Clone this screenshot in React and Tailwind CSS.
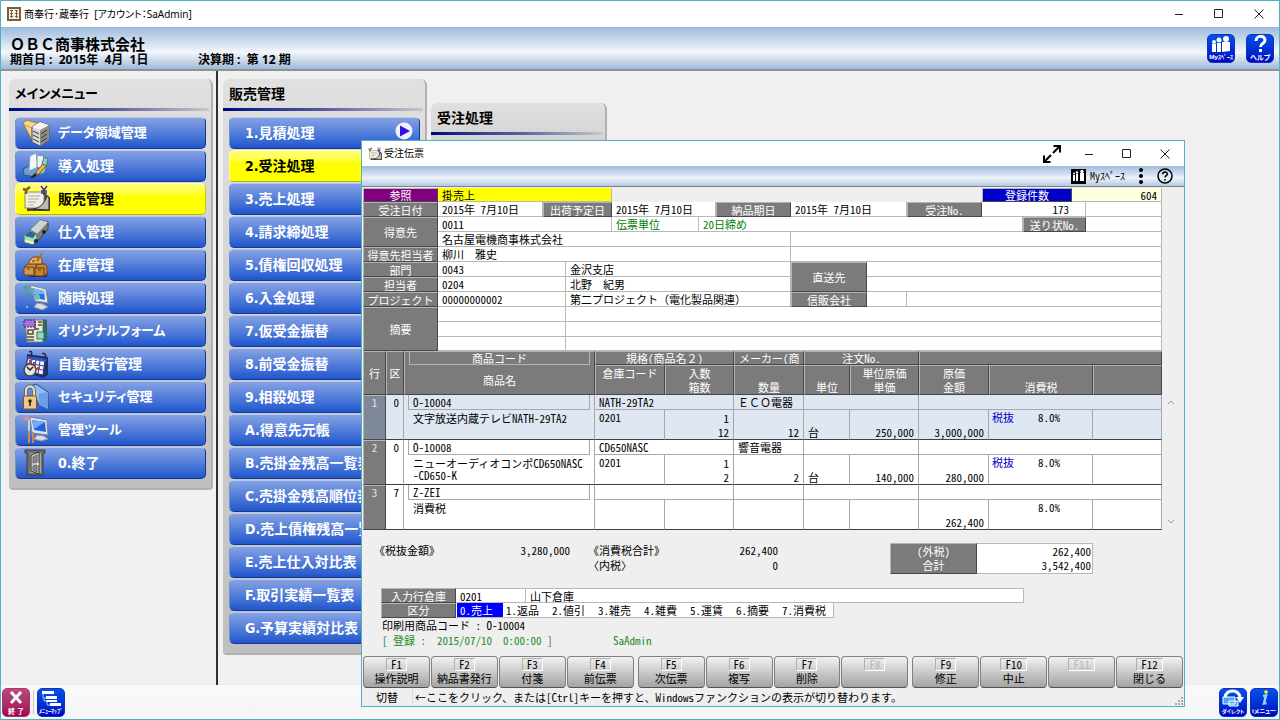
import { useState } from "react";

const mainMenu = [
  { label: "データ領域管理", icon: "data", kana: true },
  { label: "導入処理", icon: "intro" },
  { label: "販売管理", icon: "sales" },
  { label: "仕入管理", icon: "truck" },
  { label: "在庫管理", icon: "stock" },
  { label: "随時処理", icon: "monitor" },
  { label: "オリジナルフォーム", icon: "form", kana: true },
  { label: "自動実行管理", icon: "calendar" },
  { label: "セキュリティ管理", icon: "lock", kana: true },
  { label: "管理ツール", icon: "tools", kana: true },
  { label: "0.終了", icon: "door" },
];

const salesMenu = [
  "1.見積処理",
  "2.受注処理",
  "3.売上処理",
  "4.請求締処理",
  "5.債権回収処理",
  "6.入金処理",
  "7.仮受金振替",
  "8.前受金振替",
  "9.相殺処理",
  "A.得意先元帳",
  "B.売掛金残高一覧表",
  "C.売掛金残高順位表",
  "D.売上債権残高一覧表",
  "E.売上仕入対比表",
  "F.取引実績一覧表",
  "G.予算実績対比表",
];

const items = [
  { no: 1, kubun: "0", code: "O-10004", name: "文字放送内蔵テレビNATH-29TA2", spec: "NATH-29TA2", maker: "ＥＣＯ電器", wh: "0201", irisu: "1", hako: "12", qty: "12", unit: "台", price: "250,000", amount: "3,000,000", tax: "税抜", rate: "8.0%" },
  { no: 2, kubun: "0", code: "O-10008", name: "ニューオーディオコンポCD650NASC-CD650-K", spec: "CD650NASC", maker: "響音電器", wh: "0201", irisu: "1", hako: "2", qty: "2", unit: "台", price: "140,000", amount: "280,000", tax: "税抜", rate: "8.0%" },
  { no: 3, kubun: "7", code: "Z-ZEI", name: "消費税", amount: "262,400", rate: "8.0%" },
];

const kubunOptions = ["0.売上", "1.返品", "2.値引", "3.雑売", "4.雑費", "5.運賃", "6.摘要", "7.消費税"];

const fnGroups = [
  [["F1", "操作説明"], ["F2", "納品書発行"], ["F3", "付箋"], ["F4", "前伝票"]],
  [["F5", "次伝票"], ["F6", "複写"], ["F7", "削除"], ["F8", ""]],
  [["F9", "修正"], ["F10", "中止"], ["F11", ""], ["F12", "閉じる"]],
];

const icons = {
  data: (
    <>
      <path d="M1 4l4-3 3 1 8 2v15l-6 2z" fill="#f3d692" stroke="#a5772b" />
      <path d="M3 6l7 3v12" fill="none" stroke="#c89a48" />
      <path d="M10 8l8-5 9 3v15l-9 6-8-4z" fill="#d9d9d4" stroke="#555" />
      <path d="M18 11l9-5v15l-9 6z" fill="#8d8d88" />
      <path d="M10 8l8-5 9 3-9 5z" fill="#f5f5f0" />
      <path d="M11 12l6 3M11 16l6 3M11 20l6 3M19 15l6-4M19 19l6-4M19 23l6-4" stroke="#333" />
    </>
  ),
  intro: (
    <>
      <path d="M1 17l8-4 12 5-7 7-12-2z" fill="#6c9fca" stroke="#27557f" />
      <path d="M8 4l6-3 2 14-9 4z" fill="#f4f8fb" stroke="#8aa5bd" />
      <path d="M15 3l7 1-1 13-6-2z" fill="#e8f3f6" stroke="#6b98a5" />
      <path d="M22 5l4 2-3 13-5 3 1-7z" fill="#8fd0c3" stroke="#437d75" />
      <path d="M14 20l7-8 3 2-8 9z" fill="#eeb45a" stroke="#8a5a1d" />
      <path d="M8 26l5-5 2 2-4 3z" fill="#222" />
    </>
  ),
  sales: (
    <>
      <path d="M5 9h19l4 4v13H5z" fill="#494440" />
      <path d="M3 7h19v16H3z" fill="#f2efe2" stroke="#8d8878" />
      <path d="M6 11h12M6 14h11M6 17h8M7 20h5" stroke="#b2ab9b" />
      <path d="M11 24c7-1 11-5 14-13l2 1v13z" fill="#bdbab0" stroke="#292929" />
      <path d="M1 4l3 1 4-3M4 5v4" fill="none" stroke="#8b5a1f" strokeWidth="2.500" />
      <path d="M19 1l3 4 3-4M22 5v5M19 6h6M19 8h6" fill="none" stroke="#4826a0" strokeWidth="1.5" />
    </>
  ),
  truck: (
    <>
      <path d="M8 12L18 2l8 2v7L14 25l-5-9z" fill="#7c7f7e" stroke="#3f4342" />
      <path d="M8 12L18 2l8 2-11 12z" fill="#cfd2d1" />
      <path d="M2 17l6-5 7 4v6l-4 5-9-3z" fill="#a4deb4" stroke="#3b7c51" />
      <path d="M4 16l4-3 6 3-3 4-8-2z" fill="#335fa8" />
      <path d="M3 23l8 2" stroke="#f3f9c0" strokeWidth="2" />
      <circle cx="14" cy="23" r="2" fill="#1c2a20" />
      <circle cx="22" cy="14" r="2" fill="#222" />
    </>
  ),
  stock: (
    <>
      <path d="M5 26h19l2-4z" fill="#1c2547" />
      <path d="M2 16l4-3h8v10l-2 1H2z" fill="#d7984b" stroke="#744410" />
      <path d="M13 17l3-4h7l2 3v7l-3 2h-9z" fill="#c98533" stroke="#744410" />
      <path d="M7 10l4-4h7l2 2v5H7z" fill="#e2ab63" stroke="#744410" />
      <path d="M14 9l6-8 1 1-5 9z" fill="#b06f20" />
      <path d="M2 16h10v7M13 17h9v8M5 18h3M16 19h3M10 10h3" fill="none" stroke="#613608" />
    </>
  ),
  monitor: (
    <>
      <path d="M8 1l16 4 2 14-13-2z" fill="#e2e7f1" stroke="#79839b" />
      <path d="M10 4l12 3 1 9-10-2z" fill="#2b6ce0" />
      <path d="M10 4l12 3v3L12 10z" fill="#7fb0fa" />
      <path d="M15 19l6 1 5 3-6 3-8-3z" fill="#d9dce4" stroke="#8c93a7" />
      <circle cx="4" cy="4" r="2.5" fill="#4fa67c" />
      <circle cx="10" cy="6" r="2" fill="#57b395" />
      <circle cx="15" cy="13" r="3" fill="#69c7b0" />
      <circle cx="7" cy="11" r="2" fill="#49a07d" />
      <circle cx="5" cy="23" r="1" fill="#9fd6f0" />
    </>
  ),
  form: (
    <>
      <path d="M3 3h18v22H5z" fill="#eee9d6" stroke="#7c7868" />
      <path d="M21 2l4 1v20l-4 2z" fill="#2e6a59" />
      <path d="M6 13h5v4H6zM13 4v9M16 5h4M16 8h4M5 20h7M5 23h7M13 12h4" fill="none" stroke="#55503f" strokeWidth="1.5" />
      <rect x="2" y="3" width="11" height="7" fill="#a56fe0" stroke="#39206a" strokeDasharray="2 1" />
      <rect x="15" y="15" width="7" height="7" fill="#8fdcc0" stroke="#2b7b63" />
    </>
  ),
  calendar: (
    <>
      <path d="M5 4l21 3v18l-5 3L4 23z" fill="#1d2f6e" />
      <path d="M6 7l17 2-2 16L3 21z" fill="#f4f6fa" stroke="#24386f" />
      <path d="M6 6l18 3v3L5 9z" fill="#3158bd" />
      <path d="M5 13l17 3M4 17l17 3M10 9L8 22M14 10l-2 13M18 11l-2 13" stroke="#2648a8" />
      <path d="M7 10h3v3H7zM11 12h2v3h-2zM15 17h3v3h-3z" fill="#d93636" />
      <path d="M7 2c3-2 4 2 1 5M20 4c3-2 5 1 2 5" fill="none" stroke="#2b2b2b" strokeWidth="1.5" />
      <circle cx="8" cy="20" r="6" fill="#e3e3e3" stroke="#444" strokeWidth="1.5" />
      <path d="M5 17l3 3 3-3" fill="none" stroke="#222" strokeWidth="1.5" />
    </>
  ),
  lock: (
    <>
      <path d="M9 3l5-2 12 8v17l-9-4z" fill="#8fbdf2" stroke="#27488e" />
      <path d="M17 11l9-2v17l-9-4z" fill="#6ba0e8" />
      <path d="M4 13V8c0-6 8-6 8 0v5" fill="none" stroke="#5b4a26" strokeWidth="4" />
      <path d="M4 13V8c0-6 8-6 8 0v5" fill="none" stroke="#d6d9df" strokeWidth="2.500" />
      <rect x="1.500" y="13" width="13" height="13" rx="1" fill="#edc78a" stroke="#80561c" />
      <circle cx="8" cy="18" r="1.700" fill="#2b1c06" />
      <path d="M8 18v5" stroke="#2b1c06" strokeWidth="1.500" />
    </>
  ),
  tools: (
    <>
      <path d="M8 1l17 3 1 15-16-2z" fill="#dfe5ef" stroke="#74809a" />
      <path d="M10 4l13 2 1 10-12-2z" fill="#1f63e0" />
      <path d="M10 4l13 2-11 7z" fill="#71a9fb" />
      <path d="M15 19l7 1 4 3-7 2-7-2z" fill="#d8dbe4" stroke="#8c93a7" />
      <path d="M1 3h8" stroke="#cf9485" strokeWidth="3" />
      <path d="M7 4v11" stroke="#ccc" strokeWidth="2" />
      <path d="M7 15v12M11 16v11" stroke="#c98c3f" strokeWidth="2" />
    </>
  ),
  door: (
    <>
      <path d="M3 1h20v3h-2v22H5V4H3z" fill="#6f6f6f" stroke="#3c3c3c" />
      <path d="M8 4h11v20H8z" fill="#a8a8a8" />
      <path d="M9 6l8-3v22l-8-3z" fill="#c9c9c9" stroke="#333" />
      <path d="M11 8l4-2v7l-4 1zM11 17l4-1v7l-4-2z" fill="#8b8b8b" stroke="#555" strokeWidth=".7" />
      <circle cx="16" cy="15" r="1" fill="#f2f2f2" />
    </>
  ),
};

const GOTHIC = "font-['Noto_Sans_CJK_JP',sans-serif] text-[11px] leading-[14px] [font-feature-settings:'hwid']";
const WIDE = "[font-feature-settings:normal]";
const BEVEL = "border-t border-l border-b border-r border-t-[#b4b4b4] border-l-[#b4b4b4] border-b-[#484848] border-r-[#484848]";

function MenuPanel({ title, titleSize = "text-sm", className, children }) {
  return (
    <section className={`rounded-t-md rounded-b-sm border-r-2 border-b-2 border-[#b0b0b0] bg-linear-to-b from-[#e0e0e0] to-[#bfbfbf] ${className}`}>
      <h2 className={`h-[29px] pl-1.5 leading-[30px] font-bold text-black ${titleSize}`}>{title}</h2>
      <div className="mr-0.5 h-[3px] bg-linear-to-r from-[#000080] via-[#5a5a9c] to-[#c8c8c8]" />
      {children}
    </section>
  );
}

function MenuButton({ active, onClick, className, children }) {
  return (
    <button
      type="button"
      onClick={onClick}
      className={`flex h-8 w-full items-center rounded-[5px] border text-left font-bold whitespace-nowrap ${
        active
          ? "border-t-[#ffffb0] border-r-[#c8c800] border-b-[#b5b500] border-l-[#ffff90] bg-linear-to-b from-[#ffff78] to-[#ffff00] to-40% text-black"
          : "border-t-[#b4c8f0] border-r-[#16388c] border-b-[#16388c] border-l-[#7090d8] bg-linear-to-b from-[#86a2e4] to-[#1f55cc] text-white"
      } ${className}`}
    >
      {children}
    </button>
  );
}

function IconButton({ label, caption, color = "blue", size = "text-[7px]", children }) {
  return (
    <button
      type="button"
      aria-label={label}
      className={`flex h-[29px] w-7 shrink-0 flex-col items-center justify-between overflow-hidden rounded-[5px] border text-white ${
        color === "red" ? "border-[#b03070] bg-linear-to-b from-[#b84a7c] to-[#a00050]" : "border-[#1030c8] bg-linear-to-b from-[#0a50e8] to-[#0000c0]"
      }`}
    >
      <svg viewBox="0 0 24 18" className="h-[18px] w-6" fill="none">
        {children}
      </svg>
      <span className={`leading-[9px] font-bold whitespace-nowrap [font-feature-settings:'palt'] ${size}`}>{caption}</span>
    </button>
  );
}

function WindowButtons({ width = "w-10" }) {
  return (
    <div className="flex">
      <button type="button" aria-label="最小化" className={`flex items-center justify-center ${width}`}>
        <svg width="10" height="10" stroke="#222"><path d="M1 5.500h8" /></svg>
      </button>
      <button type="button" aria-label="最大化" className={`flex items-center justify-center ${width}`}>
        <svg width="10" height="10" fill="none" stroke="#222"><path d="M.5 .5h8v8h-8z" /></svg>
      </button>
      <button type="button" aria-label="閉じる" className={`flex items-center justify-center ${width}`}>
        <svg width="10" height="10" stroke="#222"><path d="M.5 .5l9 9M9.500 .5l-9 9" /></svg>
      </button>
    </div>
  );
}

function Tag({ htmlFor, bg = "bg-[#7b7b7b]", className, children }) {
  return (
    <label htmlFor={htmlFor} className={`flex items-center justify-center overflow-hidden whitespace-nowrap text-white ${BEVEL} ${bg} ${className}`}>
      {children}
    </label>
  );
}

function Field({ id, value = "", label, bg = "bg-white", className }) {
  return (
    <input
      id={id}
      aria-label={label}
      readOnly
      value={value}
      className={`block min-w-0 border-r border-b border-[#b8b8b8] px-1 outline-none ${bg} ${className}`}
    />
  );
}

function VoucherHead() {
  return (
    <div className="grid grid-cols-[75px_105px_23px_46px_87px_17px_75px_76px_40px_75px_41px_49px_14px_1fr] grid-rows-[14px_repeat(9,15px)_14px]">
      <Tag htmlFor="mode" bg="bg-[#800080]" className="col-start-1 row-start-1">参照</Tag>
      <Field id="mode" value="掛売上" bg="bg-[#ffff00]" className="col-start-2 col-end-5 row-start-1" />
      <Tag htmlFor="count" bg="bg-[#0000c8]" className="col-start-11 col-end-13 row-start-1">登録件数</Tag>
      <Field id="count" value="604" bg="bg-[#ffffe1]" className="col-start-13 col-end-15 row-start-1 text-right" />

      <Tag htmlFor="odate" className="col-start-1 row-start-2">受注日付</Tag>
      <Field id="odate" value="2015年 7月10日" className="col-start-2 row-start-2" />
      <Tag htmlFor="sdate" className="col-start-3 col-end-5 row-start-2">出荷予定日</Tag>
      <Field id="sdate" value="2015年 7月10日" className="col-start-5 col-end-7 row-start-2" />
      <Tag htmlFor="ddate" className="col-start-7 row-start-2">納品期日</Tag>
      <Field id="ddate" value="2015年 7月10日" className="col-start-8 col-end-10 row-start-2" />
      <Tag htmlFor="ono" className="col-start-10 row-start-2">受注No.</Tag>
      <Field id="ono" value="173" className="col-start-11 col-end-14 row-start-2 pr-4 text-right" />
      <div className="col-start-14 row-start-2 border-r border-b border-[#b8b8b8] bg-white" />

      <Tag htmlFor="cust" className="col-start-1 row-span-2 row-start-3">得意先</Tag>
      <Field id="cust" value="0011" className="col-start-2 col-end-5 row-start-3" />
      <Field label="伝票単位" value="伝票単位" className="col-start-5 row-start-3 text-[#008000]" />
      <Field label="締め日" value="20日締め" className="col-start-6 col-end-12 row-start-3 text-[#008000]" />
      <Tag htmlFor="slip" className="col-start-12 col-end-14 row-start-3">送り状No.</Tag>
      <Field id="slip" className="col-start-14 row-start-3" />
      <Field label="得意先名" value="名古屋電機商事株式会社" className="col-start-2 col-end-8 row-start-4" />
      <Field label="得意先名2" className="col-start-8 col-end-15 row-start-4" />

      <Tag htmlFor="person" className="col-start-1 row-start-5">得意先担当者</Tag>
      <Field id="person" value="柳川　雅史" className={`col-start-2 col-end-8 row-start-5 ${WIDE}`} />
      <Field label="得意先担当者2" className="col-start-8 col-end-15 row-start-5" />

      <Tag htmlFor="dept" className="col-start-1 row-start-6">部門</Tag>
      <Field id="dept" value="0043" className="col-start-2 col-end-4 row-start-6" />
      <Field label="部門名" value="金沢支店" className="col-start-4 col-end-8 row-start-6" />
      <Tag htmlFor="direct" className="col-start-8 row-span-2 row-start-6">直送先</Tag>
      <Field id="direct" className="col-start-9 col-end-15 row-start-6" />

      <Tag htmlFor="staff" className="col-start-1 row-start-7">担当者</Tag>
      <Field id="staff" value="0204" className="col-start-2 col-end-4 row-start-7" />
      <Field label="担当者名" value="北野　紀男" className={`col-start-4 col-end-8 row-start-7 ${WIDE}`} />
      <Field label="直送先名" className="col-start-9 col-end-15 row-start-7" />

      <Tag htmlFor="project" className="col-start-1 row-start-8">プロジェクト</Tag>
      <Field id="project" value="00000000002" className="col-start-2 col-end-4 row-start-8" />
      <Field label="プロジェクト名" value="第二プロジェクト（電化製品関連）" className={`col-start-4 col-end-8 row-start-8 ${WIDE}`} />
      <Tag htmlFor="credit" className="col-start-8 row-start-8">信販会社</Tag>
      <Field id="credit" className="col-start-9 row-start-8" />
      <Field label="信販会社名" className="col-start-10 col-end-15 row-start-8" />

      <Tag htmlFor="memo" className="col-start-1 row-span-3 row-start-9">摘要</Tag>
      <Field id="memo" className="col-start-2 col-end-4 row-start-9" />
      <Field label="摘要名" className="col-start-4 col-end-15 row-start-9" />
      <Field label="摘要2" className="col-start-2 col-end-4 row-start-10" />
      <Field label="摘要名2" className="col-start-4 col-end-15 row-start-10" />
      <Field label="摘要3" className="col-start-2 col-end-4 row-start-11" />
      <Field label="摘要名3" className="col-start-4 col-end-15 row-start-11" />
    </div>
  );
}

function Th({ className = "", children, ...rest }) {
  return (
    <th className={`overflow-hidden bg-[#7b7b7b] p-0 text-center font-normal whitespace-nowrap text-white ${BEVEL} ${className}`} {...rest}>
      {children}
    </th>
  );
}

function ItemTable() {
  const [selected, setSelected] = useState(1);
  const line = "border-r border-b border-[#a8a8a8]";
  const last = "border-r border-b border-r-[#a8a8a8] border-b-[#404040]";
  return (
    <table className="w-full table-fixed border-separate border-spacing-0">
      <colgroup>
        <col className="w-[23px]" />
        <col className="w-[18px]" />
        <col className="w-[191px]" />
        <col className="w-[70px]" />
        <col className="w-[69px]" />
        <col className="w-[70px]" />
        <col className="w-[46px]" />
        <col className="w-[69px]" />
        <col className="w-[70px]" />
        <col className="w-[104px]" />
        <col />
      </colgroup>
      <thead>
        <tr className="h-[14px]">
          <Th rowSpan={2}>行</Th>
          <Th rowSpan={2}>区</Th>
          <Th rowSpan={2} className="align-top">
            <div className="mx-1 h-[13px] border-x border-b border-[#b4b4b4] leading-[12px]">商品コード</div>
            <div className="pt-2">商品名</div>
          </Th>
          <Th colSpan={2} className="leading-[12px]">規格(商品名<span className={WIDE}>２</span>)</Th>
          <Th className="pl-1 text-left leading-[12px]">メーカー(商</Th>
          <Th colSpan={2} className="leading-[12px]">注文No.</Th>
          <Th colSpan={3} />
        </tr>
        <tr className="h-[30px]">
          <Th className="align-top">倉庫コード</Th>
          <Th><span className="block">入数</span><span className="block">箱数</span></Th>
          <Th className="align-bottom">数量</Th>
          <Th className="align-bottom">単位</Th>
          <Th><span className="block">単位原価</span><span className="block">単価</span></Th>
          <Th><span className="block">原価</span><span className="block">金額</span></Th>
          <Th className="align-bottom">消費税</Th>
          <Th />
        </tr>
      </thead>
      {items.map((it) => (
        <tbody key={it.no} onClick={() => setSelected(it.no)} className={selected === it.no ? "bg-[#dfe7f2]" : "bg-white"}>
          <tr className="h-[15px]">
            <td rowSpan={2} className={`p-0 text-center align-top leading-[13px] text-[#e4e4e4] ${BEVEL} ${selected === it.no ? "bg-[#7e8896]" : "bg-[#7b7b7b]"}`}>{it.no}</td>
            <td rowSpan={2} className={`p-0 pr-1 text-right align-top ${last}`}>{it.kubun}</td>
            <td rowSpan={2} className={`p-0 align-top ${last}`}>
              <div className="mx-1 h-[15px] border-x border-b border-[#a8a8a8] pl-1">{it.code}</div>
              <div className="pt-0.5 pr-2 pl-[9px] leading-[12px] break-all">{it.name}</div>
            </td>
            <td colSpan={2} className={`p-0 pl-1 ${line}`}>{it.spec}</td>
            <td className={`p-0 pl-1 whitespace-nowrap ${line} ${WIDE}`}>{it.maker}</td>
            <td colSpan={2} className={`p-0 ${line}`} />
            <td colSpan={3} className={`p-0 ${line}`} />
          </tr>
          <tr className="h-[30px]">
            <td className={`p-0 pl-1 align-top ${last}`}>{it.wh}</td>
            <td className={`p-0 pr-1 text-right ${last}`}>{it.irisu}<br />{it.hako}</td>
            <td className={`p-0 pr-1 text-right align-bottom ${last}`}>{it.qty}</td>
            <td className={`p-0 pl-1 align-bottom ${last}`}>{it.unit}</td>
            <td className={`p-0 pr-1 text-right align-bottom ${last}`}>{it.price}</td>
            <td className={`p-0 pr-1 text-right align-bottom ${last}`}>{it.amount}</td>
            <td className={`p-0 pr-8 pl-[3px] align-top ${last}`}>
              <div className="flex justify-between">
                <span className="text-[#0000c8]">{it.tax}</span>
                <span>{it.rate}</span>
              </div>
            </td>
            <td className={`p-0 ${last}`} />
          </tr>
        </tbody>
      ))}
    </table>
  );
}

function FnButton({ fn, text }) {
  return (
    <button
      type="button"
      disabled={!text}
      className="flex h-8 flex-1 flex-col items-center rounded-sm border border-[#808080] border-b-[#505050] bg-linear-to-b from-[#f2f2f2] to-[#a4a4a4] pt-px whitespace-nowrap text-black disabled:text-[#b8b8b8]"
    >
      <span className="flex h-[13px] items-center border border-t-[#b0b0b0] border-r-[#fff] border-b-[#fff] border-l-[#b0b0b0] px-1 leading-[11px]">{fn}</span>
      <span className="leading-[15px]">{text}</span>
    </button>
  );
}

function OrderVoucher() {
  const [kubun, setKubun] = useState(0);
  return (
    <div role="dialog" aria-label="受注伝票" className="absolute top-[139px] right-[94px] left-[360px] border border-[#4fb3bf] bg-[#efefef] text-black">
      <div className="flex h-[25px] items-stretch bg-white pl-1.5">
        <svg viewBox="0 0 28 28" className="h-3.5 w-3.5 self-center">{icons.sales}</svg>
        <h2 className="ml-0.5 flex-1 self-center text-[10px]">受注伝票</h2>
        <button type="button" aria-label="全画面" className="mr-2">
          <svg width="20" height="20" viewBox="0 0 20 20" fill="none" stroke="#000" strokeWidth="2"><path d="M11.500 2H18v6.500M8.500 18H2v-6.500M18 2l-7 7M2 18l7-7" /></svg>
        </button>
        <WindowButtons width="w-[38px]" />
      </div>
      <div className="flex h-[21px] items-center justify-end border-b border-[#808080] bg-linear-to-b from-[#9dbbdd] via-[#eef3f9] via-60% to-[#b4c9e2] pr-[11px]">
        <button type="button" className={`flex items-center gap-1 ${GOTHIC}`}>
          <svg width="15" height="15" viewBox="0 0 15 15">
            <path d="M0 0h15v15H0z" />
            <path d="M2 6h2v6H2zM5 5h2v7H5zM9 4h4v8H9z" fill="#fff" />
            <circle cx="3" cy="4.500" r="1" fill="#fff" /><circle cx="6" cy="3.500" r="1.200" fill="#fff" /><circle cx="11" cy="2.500" r="1.700" fill="#fff" />
          </svg>
          <span className="text-[10px]">Myｽﾍﾟｰｽ</span>
        </button>
        <button type="button" aria-label="メニュー" className="mx-3.5">
          <svg width="4" height="16"><circle cx="2" cy="2" r="2" /><circle cx="2" cy="8" r="2" /><circle cx="2" cy="14" r="2" /></svg>
        </button>
        <button type="button" aria-label="ヘルプ">
          <svg width="16" height="16" viewBox="0 0 16 16" fill="none" stroke="#000" strokeWidth="1.500"><circle cx="8" cy="8" r="7" /><path d="M5.700 6.300c0-3 4.600-3 4.600-.300 0 1.700-2.300 1.600-2.300 3.500M8 11v1.500" /></svg>
        </button>
      </div>

      <div className={GOTHIC}>
        <div className="pt-px pr-[22px] pl-px">
          <VoucherHead />
        </div>
        <div className="flex pl-px">
          <div className="min-w-0 flex-1">
            <ItemTable />
          </div>
          <div className="flex w-[22px] flex-col items-center justify-between pt-12 pr-2 pb-1 pl-1">
            <svg width="8" height="8" fill="none" stroke="#999"><path d="M1 5l3-3 3 3" /></svg>
            <svg width="8" height="8" fill="none" stroke="#999"><path d="M1 2l3 3 3-3" /></svg>
          </div>
        </div>

        <div className="mt-[13px] flex h-[31px] items-start pr-[91px] pl-3">
          <div className="flex w-[196px] justify-between"><span>《税抜金額》</span><span>3,280,000</span></div>
          <dl className="ml-[18px] grid w-[190px] grid-cols-2 leading-[15px]">
            <dt>《消費税合計》</dt><dd className="text-right">262,400</dd>
            <dt>〈内税〉</dt><dd className="text-right">0</dd>
          </dl>
          <dl className="ml-auto flex h-[31px] leading-[14px]">
            <dt className={`w-[87px] bg-[#7b7b7b] text-center text-white ${BEVEL}`}>(外税)<br />合計</dt>
            <dd className="w-[116px] border border-l-0 border-[#b8b8b8] bg-white pr-px text-right">262,400<br />3,542,400</dd>
          </dl>
        </div>

        <div className="mt-3.5 mr-40 ml-[19px] flex h-[15px]">
          <Tag htmlFor="wh" className="w-[75px]">入力行倉庫</Tag>
          <Field id="wh" value="0201" className="w-[70px] border-t" />
          <Field label="倉庫名" value="山下倉庫" className="flex-1 border-t" />
        </div>
        <div className="ml-[19px] flex h-[15px]">
          <div className={`w-[75px] bg-[#7b7b7b] text-center leading-[13px] text-white ${BEVEL}`}>区分</div>
          <div className="flex border-r border-b border-[#b8b8b8] bg-white pr-1 pl-px">
            {kubunOptions.map((o, i) => (
              <button
                key={o}
                type="button"
                onClick={() => setKubun(i)}
                className={`min-w-[46px] px-[3px] text-left ${kubun === i ? "bg-[#0000ff] text-white" : ""}`}
              >
                {o}
              </button>
            ))}
          </div>
        </div>
        <div className="pl-5 leading-[15px]">
          <p>印刷用商品コード : O-10004</p>
          <p className="flex text-[#228b22]">
            <span className="w-[231px] whitespace-pre">{"[ 登録 :  2015/07/10  0:00:00 ]"}</span>
            <span>SaAdmin</span>
          </p>
        </div>

        <div className="mt-2 flex gap-1 px-px">
          {fnGroups.map((g, i) => (
            <div key={i} className="flex flex-1 gap-px">
              {g.map(([fn, text]) => <FnButton key={fn} fn={fn} text={text} />)}
            </div>
          ))}
        </div>
        <div className="flex h-[18px] items-center">
          <button type="button" className="h-4 w-[51px] border-r border-[#d8d8d8]">切替</button>
          <p className={`flex-1 pl-0.5 ${WIDE}`}>
            ←ここをクリック、または<span className="[font-feature-settings:'hwid']">[Ctrl]</span>キーを押すと、
            <span className="[font-feature-settings:'hwid']">Windows</span>ファンクションの表示が切り替わります。
          </p>
          <svg width="10" height="10" className="self-end" fill="#aaa"><path d="M7 1h2v2H7zM4 4h2v2H4zM7 4h2v2H7zM1 7h2v2H1zM4 7h2v2H4zM7 7h2v2H7z" /></svg>
        </div>
      </div>
    </div>
  );
}

export default function App() {
  const [main, setMain] = useState(2);
  const [sub, setSub] = useState(1);
  return (
    <div className="relative flex min-h-screen flex-col overflow-hidden border border-[#4fb3bf] bg-[#f0f0f0] font-['Noto_Sans','Noto_Sans_CJK_JP',sans-serif] text-black [font-feature-settings:'palt']">
      <header>
        <div className="flex h-[26px] items-stretch bg-white pl-1.5">
          <svg viewBox="0 0 14 14" className="h-3.5 w-3.5 self-center" fill="none" stroke="#77603a"><path d="M0 0h14v14H0z" fill="#77603a" stroke="none" /><path d="M2 2h10v10H2z" fill="#f6f2e6" stroke="none" /><path d="M3 3.500h3M8 3.500h3M3 6.500h3M8 6.500h3M4.500 3v8M9.500 3v8M3 9.500h3M8 9.500h3" /></svg>
          <h1 className="ml-[3px] flex-1 self-center text-[10px] whitespace-pre">商奉行･蔵奉行  [アカウント：SaAdmin]</h1>
          <WindowButtons />
        </div>
        <div className="flex h-11 justify-between border-b-2 border-[#8c929a] bg-linear-to-b from-[#9dbbdd] via-[#f4f7fb] via-60% to-[#9fb9d8] pt-2 pr-[5px] pl-[9px] font-bold">
          <div className={WIDE}>
            <p className="text-[15px] leading-[18px]">ＯＢＣ商事株式会社</p>
            <p className="flex text-xs leading-[13px] whitespace-pre">
              <span className="w-[188px]">期首日 :  2015年  4月  1日</span>
              <span>決算期 :  第 12 期</span>
            </p>
          </div>
          <div className="-mt-px flex gap-[11px]">
            <IconButton label="Myスペース" caption="Myｽﾍﾟｰｽ" size="text-[6px]">
              <path d="M3 17V9h4v8zM8 17V8h4v9zM13 17V7h8v9z" fill="#fff" />
              <circle cx="5" cy="7" r="2" fill="#fff" /><circle cx="10" cy="5" r="2.500" fill="#fff" /><circle cx="17" cy="4" r="3" fill="#fff" />
            </IconButton>
            <IconButton label="ヘルプ" caption="ヘルプ">
              <path d="M8 6c0-6 9-6 9-1 0 4-4.500 3-4.500 7M12.500 14v3" stroke="#fff" strokeWidth="3" />
            </IconButton>
          </div>
        </div>
      </header>

      <main className="flex flex-1 items-stretch font-['DejaVu_Sans_Condensed','Noto_Sans_CJK_JP',sans-serif]">
        <div className="w-[217px] border-r-2 border-[#303030] pt-2 pl-2">
          <MenuPanel title="メインメニュー" titleSize="text-[13px]" className="w-[204px] pb-[9px]">
            <nav className="mt-1.5 mr-[5px] ml-1.5 flex flex-col gap-px">
              {mainMenu.map((m, i) => (
                <MenuButton key={m.label} active={main === i} onClick={() => setMain(i)} className={`gap-2 pl-1.5 ${m.kana ? "text-[13px]" : "text-sm"}`}>
                  <svg viewBox="0 0 28 28" className="h-7 w-7 shrink-0">{icons[m.icon]}</svg>
                  {m.label}
                </MenuButton>
              ))}
            </nav>
          </MenuPanel>
        </div>
        <div className="flex flex-1 items-start gap-1 pt-2 pl-[5px]">
          <MenuPanel title="販売管理" className="w-[204px] pb-[9px]">
            <nav className="mt-1.5 mr-[5px] ml-1.5 flex flex-col gap-px">
              {salesMenu.map((m, i) => (
                <MenuButton key={m} active={sub === i} onClick={() => setSub(i)} className="justify-between overflow-hidden pr-1.5 pl-[15px] text-sm">
                  {m}
                  {i === 0 && (
                    <svg width="18" height="18" className="mb-1 shrink-0"><circle cx="9" cy="9" r="8.500" fill="#f2f0ff" /><path d="M5 3.500v11l10-5.500z" fill="#3010e0" /></svg>
                  )}
                </MenuButton>
              ))}
            </nav>
          </MenuPanel>
          <MenuPanel title="受注処理" className="mt-6 w-[176px] pb-[70px]" />
        </div>
      </main>

      <footer className="flex h-[34px] items-center gap-[3px] bg-linear-to-b from-[#fafafa] to-[#f4f4f4] px-px">
        <IconButton label="終了" caption="終 了" color="red">
          <path d="M7 3l10 11M17 3L7 14" stroke="#fff" strokeWidth="3" />
        </IconButton>
        <div className="h-6 w-px bg-[#c8c8c8]" />
        <IconButton label="メニューマップ" caption="ﾒﾆｭｰﾏｯﾌﾟ" size="text-[6px]">
          <path d="M3 2h12v3H3zM7 7h11v3H7zM7 11h11v2H7zM11 14h11v3H11z" fill="#fff" />
          <path d="M4 5v4h3M5 9v3h3M8 13v3h3" stroke="#8cf" />
        </IconButton>
        <div className="flex-1" />
        <IconButton label="ダイレクト" caption="ダイレクト" size="text-[5px]">
          <path d="M2 8h12v7H2zM8 12h9v5H8z" fill="#4aa8f8" stroke="#fff" />
          <path d="M4 8C6 0 17 0 19 8" stroke="#fff" strokeWidth="3" /><path d="M15 8h8l-4 6z" fill="#fff" />
        </IconButton>
        <IconButton label="iメニュー" caption="iメニュー" size="text-[6px]">
          <path d="M11 7l3-.500-2 8 2.500-.500" stroke="#9cf" strokeWidth="2.500" /><circle cx="14" cy="3" r="1.800" fill="#ff0" />
        </IconButton>
      </footer>

      <OrderVoucher />
    </div>
  );
}
